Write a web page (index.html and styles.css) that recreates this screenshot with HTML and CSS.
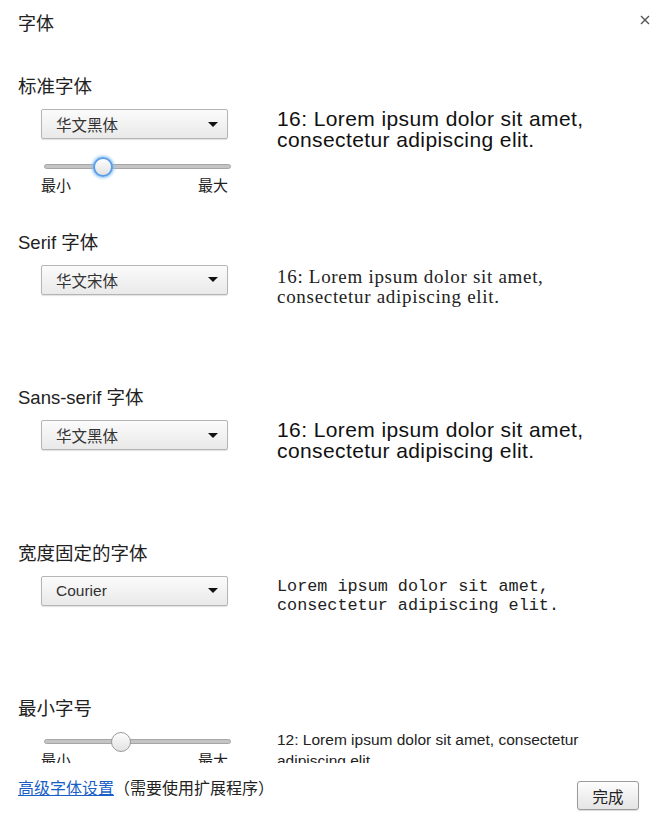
FILE: index.html
```html
<!DOCTYPE html>
<html lang="zh-CN">
<head>
    <meta charset="UTF-8">
    <title>字体</title>
    <link rel="stylesheet" href="styles.css">
</head>
<body>

<div class="dialog">
    <div class="dialog-head">
        <h1>字体</h1>
        <span class="close-btn">
            <svg width="10" height="10" viewBox="0 0 10 10"><path d="M1 1 L9 9 M9 1 L1 9" stroke="#555" stroke-width="1.4"/></svg>
        </span>
    </div>

    <div class="content">
        <div class="section">
            <h2>标准字体</h2>
            <div class="row">
                <div class="controls">
                    <div class="select"><span>华文黑体</span><i class="arrow"></i></div>
                    <div class="slider">
                        <div class="track"></div>
                        <div class="thumb focused" style="left: 49px;"></div>
                    </div>
                    <div class="slider-labels"><span>最小</span><span>最大</span></div>
                </div>
                <div class="sample sample-sans">16: Lorem ipsum dolor sit amet, consectetur adipiscing elit.</div>
            </div>
        </div>

        <div class="section">
            <h2>Serif 字体</h2>
            <div class="row">
                <div class="controls">
                    <div class="select"><span>华文宋体</span><i class="arrow"></i></div>
                </div>
                <div class="sample sample-serif">16: Lorem ipsum dolor sit amet, consectetur adipiscing elit.</div>
            </div>
        </div>

        <div class="section">
            <h2>Sans-serif 字体</h2>
            <div class="row">
                <div class="controls">
                    <div class="select"><span>华文黑体</span><i class="arrow"></i></div>
                </div>
                <div class="sample sample-sans">16: Lorem ipsum dolor sit amet, consectetur adipiscing elit.</div>
            </div>
        </div>

        <div class="section">
            <h2>宽度固定的字体</h2>
            <div class="row">
                <div class="controls">
                    <div class="select"><span>Courier</span><i class="arrow"></i></div>
                </div>
                <div class="sample sample-mono">Lorem ipsum dolor sit amet, consectetur adipiscing elit.</div>
            </div>
        </div>

        <div class="section">
            <h2>最小字号</h2>
            <div class="row">
                <div class="controls">
                    <div class="slider slider-min">
                        <div class="track"></div>
                        <div class="thumb" style="left: 67px;"></div>
                    </div>
                    <div class="slider-labels"><span>最小</span><span>最大</span></div>
                </div>
                <div class="sample sample-small">12: Lorem ipsum dolor sit amet, consectetur adipiscing elit.</div>
            </div>
        </div>
    </div>

    <div class="dialog-foot">
        <p><a href="#">高级字体设置</a>（需要使用扩展程序）</p>
        <button>完成</button>
    </div>
</div>

</body>
</html>
```

FILE: styles.css
```css
body {
    margin: 0;
    background-color: #fff;
    color: #222;
    font-family: "Liberation Sans", "Noto Sans CJK SC", sans-serif;
}
.dialog {
    width: 650px;
    height: 822px;
    display: flex;
    flex-direction: column;
}
.dialog-head {
    display: flex;
    justify-content: space-between;
    padding: 13px 0 0 18px;
    height: 77px;
    box-sizing: border-box;
    flex-shrink: 0;
}
h1 {
    margin: 0;
    font-size: 18px;
    font-weight: normal;
    line-height: 22px;
}
.close-btn {
    margin-top: -2px;
    width: 10px;
    height: 10px;
}
.content {
    height: 686px;
    flex-shrink: 0;
    overflow: hidden;
    padding-left: 18px;
}
.section {
    height: 155.5px;
}
h2 {
    margin: 0 0 12px;
    font-size: 18.5px;
    font-weight: normal;
    line-height: 20px;
}
.row {
    display: flex;
}
.controls {
    width: 236px;
    padding-left: 23px;
    box-sizing: border-box;
    flex-shrink: 0;
}
.select {
    width: 187px;
    height: 30px;
    box-sizing: border-box;
    border: 1px solid #b5b5b5;
    border-radius: 2px;
    background: linear-gradient(#fbfbfb, #e9e9e9);
    box-shadow: 0 1px 1px rgba(0,0,0,0.12);
    display: flex;
    align-items: center;
    justify-content: space-between;
    padding: 0 9px 0 14px;
    font-size: 15.5px;
    color: #333;
}
.arrow {
    width: 0;
    height: 0;
    border-left: 5px solid transparent;
    border-right: 5px solid transparent;
    border-top: 5px solid #111;
}
.slider {
    position: relative;
    width: 187px;
    height: 22px;
    margin: 17px 0 0 3px;
}
.slider-min {
    margin-top: 0;
}
.track {
    position: absolute;
    left: 0;
    right: 0;
    top: 8px;
    height: 5px;
    border-radius: 3px;
    background: #c4c4c4;
    border: 1px solid #a6a6a6;
    box-sizing: border-box;
}
.thumb {
    position: absolute;
    top: 1px;
    width: 20px;
    height: 20px;
    box-sizing: border-box;
    border-radius: 50%;
    border: 1px solid #9a9a9a;
    background: linear-gradient(#fdfdfd, #e2e2e2);
}
.thumb.focused {
    border: 2px solid #5b9ee8;
    box-shadow: 0 0 3px 1px #8fc2f5;
}
.slider-labels {
    display: flex;
    justify-content: space-between;
    width: 187px;
    font-size: 15px;
    line-height: 18px;
    margin-top: -1px;
}
.sample {
    padding-left: 23px;
}
.sample-sans {
    font-family: "Liberation Sans", sans-serif;
    font-size: 21px;
    letter-spacing: 0.4px;
    line-height: 21px;
    margin-top: -1px;
    color: #111;
    width: 320px;
}
.sample-serif {
    font-family: "Liberation Serif", serif;
    font-size: 19px;
    letter-spacing: 0.7px;
    line-height: 20px;
    margin-top: 2px;
    color: #222;
    width: 300px;
}
.sample-mono {
    font-family: "Liberation Mono", monospace;
    font-size: 16.8px;
    line-height: 19px;
    margin-top: 1px;
    color: #222;
    width: 300px;
}
.sample-small {
    font-size: 15.5px;
    line-height: 21px;
    margin-top: -2px;
    width: 320px;
}
.dialog-foot {
    display: flex;
    justify-content: space-between;
    align-items: flex-start;
    padding: 16px 11px 0 18px;
}
.dialog-foot p {
    margin: 0;
    font-size: 16px;
    line-height: 20px;
}
.dialog-foot a {
    color: #1a5fc8;
}
button {
    margin-top: 2px;
    width: 62px;
    height: 29px;
    font-family: "Liberation Sans", "Noto Sans CJK SC", sans-serif;
    font-size: 15.5px;
    color: #222;
    border: 1px solid #9b9b9b;
    border-radius: 3px;
    background: linear-gradient(#fdfdfd, #e4e4e4);
    box-shadow: 0 1px 1px rgba(0,0,0,0.15);
}
```
